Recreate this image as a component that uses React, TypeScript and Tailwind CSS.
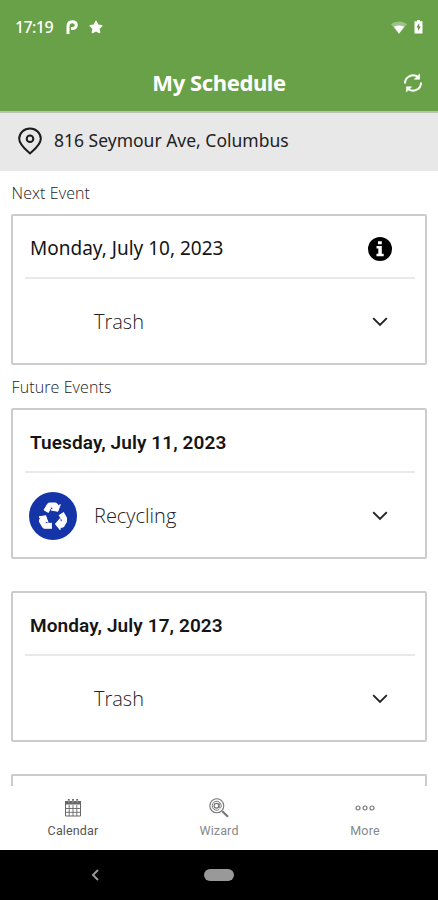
import clsx from 'clsx';
import { FaStar } from 'react-icons/fa';

type Event = {
    date: string;
    service: 'Trash' | 'Recycling';
    next?: boolean;
};

const nextEvent: Event = { date: 'Monday, July 10, 2023', service: 'Trash', next: true };

const futureEvents: Event[] = [
    { date: 'Tuesday, July 11, 2023', service: 'Recycling' },
    { date: 'Monday, July 17, 2023', service: 'Trash' },
];

function WifiIcon() {
    return (
        <svg width="16" height="13" viewBox="0 0 16 13" fill="white">
            <path d="M0 3.200C4.500-.5 11.500-.5 16 3.200L8 13Z" opacity=".35" />
            <path d="M2.800 5.800C6 4 10 4 13.200 5.800L8 12.500Z" />
        </svg>
    );
}

function BatteryIcon() {
    return (
        <svg width="9" height="14" viewBox="0 0 9 14">
            <path d="M3 0h3v1.200h2.500v12.300h-8V1.200H3Z" fill="white" />
            <path d="M5.200 3 2.500 7.500h1.600v3.500l2.600-4.500H5.200Z" fill="#5f8f45" />
        </svg>
    );
}

function RefreshIcon() {
    return (
        <svg width="20" height="20" viewBox="0 0 20 20" fill="none" stroke="white" strokeWidth="2">
            <path d="M2 10.500A8 8 0 0 1 15.300 4.400" />
            <path d="M18 9.500A8 8 0 0 1 4.700 15.600" />
            <path d="M16.600 1v5.200H11.400Z" fill="white" strokeWidth=".6" />
            <path d="M3.400 19v-5.200h5.200Z" fill="white" strokeWidth=".6" />
        </svg>
    );
}

function PinIcon() {
    return (
        <svg width="24" height="28" viewBox="0 0 24 28" fill="none" stroke="#1c1c1c" strokeWidth="2">
            <path d="M12 26.500C9.500 24 1.200 18.200 1.200 11.800a10.800 10.400 0 0 1 21.600 0C22.800 18.200 14.500 24 12 26.500Z" strokeLinejoin="round" />
            <circle cx="12" cy="11.800" r="3.300" />
        </svg>
    );
}

function InfoIcon() {
    return (
        <svg width="24" height="24" viewBox="0 0 24 24">
            <circle cx="12" cy="12" r="12" fill="black" />
            <path d="M10 4.300h3.800v3H10ZM8.500 9h5.300v7.700h1.900v2.500H8.500v-2.500h1.800v-5.200H8.500Z" fill="white" />
        </svg>
    );
}

const recycleArrow = 'M5 8 8.600 2Q9.200 1 10.400 1h6.200q1 0 1.600 1l1 1.800 2.100-1.200-2.500 6.700L12 8l2.100-1.200-1.700-2.400-3 6Z';

function RecycleIcon() {
    return (
        <svg width="28" height="28" viewBox="0 0 28 28" fill="white" stroke="white" strokeWidth="1">
            <path d={recycleArrow} />
            <path d={recycleArrow} transform="rotate(120 14 15)" />
            <path d={recycleArrow} transform="rotate(240 14 15)" />
        </svg>
    );
}

function ChevronDown() {
    return (
        <svg width="16" height="10" viewBox="0 0 16 10" fill="none" stroke="#222" strokeWidth="1.900">
            <path d="M1.200 1.200 8 8l6.800-6.800" />
        </svg>
    );
}

function CalendarIcon() {
    return (
        <svg width="18" height="19" viewBox="0 0 18 19" fill="none" stroke="#666">
            <path d="M1.500 3.500h15v14.500h-15Z" />
            <path d="M1 3h16v3.500H1Z" fill="#666" stroke="none" />
            <path d="M5.200 7v11M9 7v11M12.800 7v11M1 10.500h16M1 14.300h16" strokeWidth=".9" />
            <path d="M4.800 1v4M9 1v4M13.200 1v4" strokeWidth="1.800" />
            <path d="M4.800 2v2.500M9 2v2.500M13.200 2v2.500" stroke="#ddd" strokeWidth=".6" />
        </svg>
    );
}

function WizardIcon() {
    return (
        <svg width="20" height="20" viewBox="0 0 20 20" fill="none" stroke="#777">
            <circle cx="7.800" cy="7.800" r="7" strokeWidth="1.100" />
            <circle cx="7.500" cy="7.800" r="2.400" strokeWidth="1.200" />
            <path d="M10.200 5v4.200c0 1.500 2 1.300 2-1.400a4.500 4.500 0 1 0-2 3.700" strokeWidth="1" />
            <path d="m13.300 13.300 5.700 5.500" strokeWidth="2.200" />
        </svg>
    );
}

function MoreIcon() {
    return (
        <svg width="20" height="6" viewBox="0 0 20 6" fill="none" stroke="#777" strokeWidth="1.200">
            <circle cx="3" cy="3" r="2" />
            <circle cx="10" cy="3" r="2" />
            <circle cx="17" cy="3" r="2" />
        </svg>
    );
}

// Tarjeta de un evento de recolección
function EventCard({ event }: { event: Event }) {
    return (
        <div className="mx-[11px] h-[151px] shrink-0 rounded-[2px] border-2 border-[#cbcdcc] bg-white pr-[10px] pl-3">
            <div className="flex h-[63px] items-center justify-between border-b-2 border-[#e9e9e9] pt-1 pr-[23px] pl-[5px]">
                <h2
                    className={clsx(
                        'whitespace-nowrap text-[#151515]',
                        event.next
                            ? "font-['Noto_Sans',sans-serif] text-[19px]"
                            : "pt-[2px] font-['Roboto',sans-serif] text-[19px] font-semibold tracking-[0.1px]"
                    )}
                >
                    {event.date}
                </h2>
                {event.next && <InfoIcon />}
            </div>
            <div className="flex h-[84px] items-center pt-[2px] pr-[27px] pl-[4px]">
                <div className="w-[65px]">
                    {event.service === 'Recycling' && (
                        <div className="flex size-[48px] items-center justify-center rounded-full bg-[#1434a8]">
                            <RecycleIcon />
                        </div>
                    )}
                </div>
                <span className="flex-1 font-['Open_Sans',sans-serif] text-[20px] font-light text-[#222]">{event.service}</span>
                <ChevronDown />
            </div>
        </div>
    );
}

function SectionLabel({ children }: { children: string }) {
    return (
        <p className="flex h-[43px] shrink-0 items-center pt-px pl-[11.5px] font-['Open_Sans',sans-serif] text-base font-light tracking-[0.1px] text-[#222]">
            {children}
        </p>
    );
}

const tabs = [
    { label: 'Calendar', icon: <CalendarIcon />, active: true },
    { label: 'Wizard', icon: <WizardIcon />, active: false },
    { label: 'More', icon: <MoreIcon />, active: false },
];

export default function App() {
    return (
        <div className="flex h-[900px] w-[438px] flex-col overflow-hidden bg-white font-['Noto_Sans',sans-serif]">
            <header className="h-[113px] shrink-0 border-b-2 border-[#b8c4b0] bg-[#68a147] text-white">
                <div className="flex h-[54px] items-center pr-[15px] pl-[15px]">
                    <span className="w-[51px] text-base font-medium tracking-[-0.6px]">17:19</span>
                    <svg width="12" height="14" viewBox="0 0 12 14" fill="none" stroke="white" strokeWidth="3">
                        <path d="M2 14V6.500C2 3.500 3.500 1.700 6.200 1.700c2.500 0 4.100 1.400 4.100 3.400S8.700 8.600 6.400 8.600H5" />
                    </svg>
                    <FaStar size={14} className="ml-[11px]" />
                    <div className="ml-auto flex items-center gap-[7px]">
                        <WifiIcon />
                        <BatteryIcon />
                    </div>
                </div>
                <div className="grid h-[57px] grid-cols-[1fr_auto_1fr] items-center pr-[15px] pl-[15px]">
                    <h1 className="col-start-2 text-[22px] font-bold tracking-[-0.4px]">My Schedule</h1>
                    <div className="justify-self-end">
                        <RefreshIcon />
                    </div>
                </div>
            </header>

            <div className="flex h-[58px] shrink-0 items-center bg-[#e8e8e8] pb-[2px] pl-[18px]">
                <PinIcon />
                <span className="ml-[12px] pb-px text-[17.5px] text-[#222]">816 Seymour Ave, Columbus</span>
            </div>

            <main className="flex min-h-0 flex-1 flex-col overflow-hidden">
                <SectionLabel>Next Event</SectionLabel>
                <EventCard event={nextEvent} />
                <SectionLabel>Future Events</SectionLabel>
                <div className="flex flex-col gap-8">
                    {futureEvents.map((event) => (
                        <EventCard key={event.date} event={event} />
                    ))}
                    {/* la siguiente tarjeta apenas asoma sobre la barra */}
                    <div className="mx-[11px] h-[12px] rounded-t-[2px] border-2 border-b-0 border-[#cbcdcc]" />
                </div>
            </main>

            <nav className="grid h-[64px] shrink-0 grid-cols-3 bg-white">
                {tabs.map((tab) => (
                    <div key={tab.label} className="flex flex-col items-center pt-[11px]">
                        <div className="flex h-[21px] items-center">{tab.icon}</div>
                        <span
                            className={clsx(
                                "mt-[3px] font-['Roboto',sans-serif] text-[12.5px] leading-[20px] tracking-[0.15px]",
                                tab.active ? 'text-[#555]' : 'text-[#888]'
                            )}
                        >
                            {tab.label}
                        </span>
                    </div>
                ))}
            </nav>

            <div className="grid h-[50px] shrink-0 grid-cols-3 items-center bg-black">
                <svg className="ml-[91px]" width="8" height="12" viewBox="0 0 8 12" fill="none" stroke="#999" strokeWidth="2">
                    <path d="M7 1 2 6l5 5" />
                </svg>
                <div className="h-[12px] w-[30px] justify-self-center rounded-full bg-[#999]" />
            </div>
        </div>
    );
}
